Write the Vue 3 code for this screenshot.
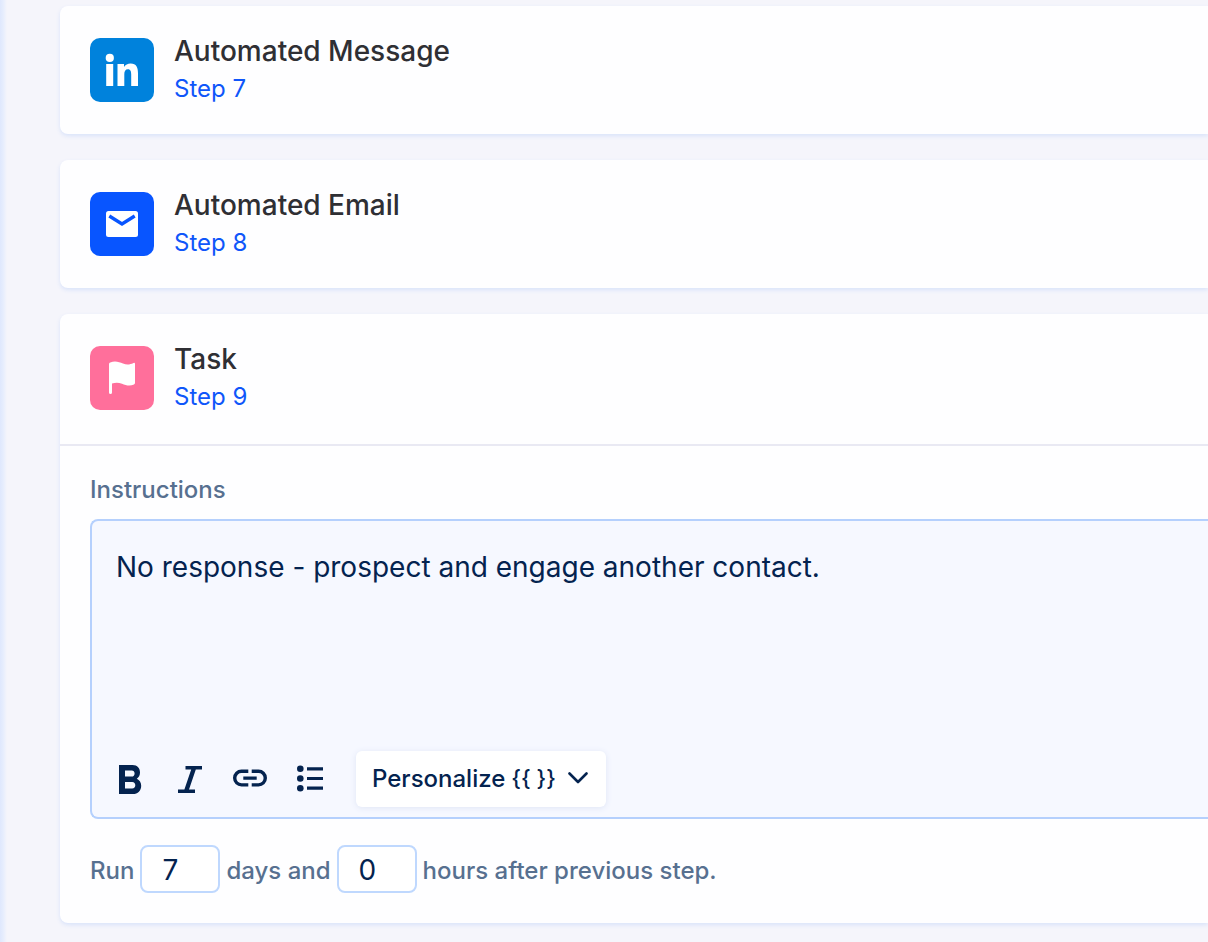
<script setup>
import { ref } from 'vue'

const steps = [
  { id: 7, title: 'Automated Message', kind: 'linkedin' },
  { id: 8, title: 'Automated Email', kind: 'email' },
  { id: 9, title: 'Task', kind: 'task' },
]
const instructions = ref('No response - prospect and engage another contact.')
const days = ref('7')
const hours = ref('0')
</script>

<template>
  <main class="sequence">
    <section v-for="step in steps" :key="step.id" class="card">
      <header class="card-head" :class="{ open: step.kind === 'task' }">
        <span class="badge" :class="step.kind">
          <svg v-if="step.kind === 'linkedin'" viewBox="0 0 64 64" aria-hidden="true">
            <circle cx="19.800" cy="19.900" r="4.100" />
            <rect x="16.200" y="26" width="7" height="22" />
            <path d="M27.500 26H34V29C35.300 26.800 37.700 25.500 40.600 25.500C46.500 25.500 48 29.500 48 35.300V48H41.200V36.500C41.200 33.600 40.600 31.300 38 31.300C35.300 31.300 34.300 33.300 34.300 36.300V48H27.500Z" />
          </svg>
          <svg v-else-if="step.kind === 'email'" viewBox="0 0 64 64" aria-hidden="true">
            <rect x="16" y="19" width="32" height="26" rx="2.500" />
            <path class="flap" d="M19.300 24L32 32L44.700 24" />
          </svg>
          <svg v-else viewBox="0 0 64 64" aria-hidden="true">
            <path d="M19 18.200Q19 17 20.200 16.600C25 14.500 29 16 33 17.600C37 19.100 40 18.600 43.500 17Q45 16.400 45 18V37Q45 38 44 38.400C40 40.300 36 39.400 32 37.700C28.500 36.300 25 36.400 22 37.600V46.500Q22 48 20.500 48Q19 48 19 46.500Z" />
          </svg>
        </span>
        <div class="heading">
          <h2>{{ step.title }}</h2>
          <a href="#">Step {{ step.id }}</a>
        </div>
      </header>

      <div v-if="step.kind === 'task'" class="card-body">
        <label class="caption" for="instructions">Instructions</label>
        <div class="editor">
          <textarea id="instructions" v-model="instructions" spellcheck="false"></textarea>
          <div class="toolbar">
            <div class="tools">
              <button type="button" aria-label="Bold">
                <svg viewBox="0 0 40 40" aria-hidden="true">
                  <path fill-rule="evenodd" d="M9 6H22.500C27.500 6 30 9.200 30 13.500C30 16.300 28.800 18.500 26.800 19.700C29.600 20.900 31.200 23.600 31.200 26.700C31.200 31.600 28 35 22.800 35H9ZM15 11.500V17.600H21.800C23.400 17.600 24.600 16.400 24.600 14.500C24.600 12.700 23.400 11.500 21.800 11.500ZM15 23V29.600H22.200C24.200 29.600 25.300 28.200 25.300 26.300C25.300 24.400 24.200 23 22.200 23Z" />
                </svg>
              </button>
              <button type="button" aria-label="Italic">
                <svg viewBox="0 0 40 40" aria-hidden="true">
                  <path d="M15.500 7H32V10.400H25.800L19 30.600H25V34H8V30.600H14.400L21.200 10.400H15.500Z" />
                </svg>
              </button>
              <button type="button" aria-label="Link">
                <svg viewBox="0 0 40 40" aria-hidden="true">
                  <path class="line" d="M18.300 12.300H11.500A6.800 6.800 0 0 0 11.500 25.900H18.300M21.700 12.300H28.500A6.800 6.800 0 0 1 28.500 25.900H21.700M13.300 19.100H26.700" />
                </svg>
              </button>
              <button type="button" aria-label="Bulleted list">
                <svg viewBox="0 0 40 40" aria-hidden="true">
                  <circle cx="10.300" cy="9.800" r="3.300" />
                  <circle cx="10.300" cy="19.500" r="3.300" />
                  <circle cx="10.300" cy="29.200" r="3.300" />
                  <path d="M17 8.200H33V11.400H17ZM17 17.900H33V21.100H17ZM17 27.600H33V30.800H17Z" />
                </svg>
              </button>
            </div>
            <button type="button" class="personalize">
              <span>Personalize</span>
              <span class="token" v-text="'{{ }}'"></span>
              <svg viewBox="0 0 20 20" aria-hidden="true"><path d="M1.500 5.500L10 14L18.500 5.500" /></svg>
            </button>
          </div>
        </div>
        <div class="schedule">
          <label for="days">Run</label>
          <input id="days" v-model="days" type="text" inputmode="numeric" />
          <label for="hours">days and</label>
          <input id="hours" v-model="hours" type="text" inputmode="numeric" />
          <span>hours after previous step.</span>
        </div>
      </div>
    </section>
  </main>
</template>

<style>
body {
  background: #f5f5fb;
}
</style>

<style scoped>
.sequence,
.sequence * {
  box-sizing: border-box;
}
.sequence {
  display: flex;
  flex-direction: column;
  gap: 26px;
  min-height: 100vh;
  padding: 6px 0 20px 60px;
  font-family: Inter, "Liberation Sans", sans-serif;
  background: linear-gradient(to right, #dfe8fd 0, #e6edfd 3px, #f5f5fb 7px);
}
.card {
  background: #fefeff;
  border-radius: 8px 0 0 8px;
  box-shadow: 0 2px 4px #d9e3fa;
}
.card-head {
  display: flex;
  gap: 20px;
  padding: 32px 30px;
}
.card-head.open {
  padding-bottom: 34px;
  border-bottom: 2px solid #e9e9f3;
}
.badge {
  flex: none;
  width: 64px;
  height: 64px;
  border-radius: 10px;
}
.badge svg {
  display: block;
  fill: #fff;
}
.badge.linkedin {
  background: #0082dc;
}
.badge.email {
  background: #0855ff;
}
.badge.task {
  background: #ff6f9b;
}
.flap {
  fill: none;
  stroke: #0855ff;
  stroke-width: 3.400;
}
.heading {
  display: flex;
  flex-direction: column;
  height: 64px;
}
h2 {
  margin: -6px 0 0;
  font-size: 28px;
  line-height: 38px;
  font-weight: 500;
  color: #2f2f34;
}
.heading a {
  font-size: 24px;
  line-height: 38px;
  color: #0f56fa;
  text-decoration: none;
}
.card-body {
  display: flex;
  flex-direction: column;
  padding: 28px 0 30px 30px;
}
.caption,
.schedule {
  font-size: 24px;
  line-height: 32px;
  font-weight: 500;
  color: #577090;
}
.editor {
  display: flex;
  flex-direction: column;
  margin: 13px 0 26px;
  border: 2px solid #b5d0fd;
  border-right: 0;
  border-radius: 8px 0 0 8px;
  background: #f6f8ff;
}
textarea {
  display: block;
  width: 100%;
  height: 230px;
  padding: 26px 24px;
  border: 0;
  outline: 0;
  resize: none;
  background: transparent;
  font-family: inherit;
  font-size: 28px;
  line-height: 40px;
  color: #04234f;
}
.toolbar {
  display: flex;
  align-items: center;
  gap: 26px;
  padding: 0 18px 10px;
}
.tools {
  display: flex;
  gap: 20px;
}
.tools button {
  width: 40px;
  height: 40px;
  padding: 0;
  border: 0;
  background: transparent;
}
.tools svg {
  display: block;
  fill: #04234f;
}
.tools .line {
  fill: none;
  stroke: #04234f;
  stroke-width: 3.400;
}
.personalize {
  display: flex;
  align-items: center;
  height: 56px;
  padding: 0 18px 2px 16px;
  border: 0;
  border-radius: 6px;
  background: #fff;
  box-shadow: 0 1px 6px #dfe5f5;
  font-family: inherit;
  font-size: 24px;
  font-weight: 500;
  color: #04234f;
}
.token {
  margin: 0 12px 0 6px;
  font-size: 22px;
}
.personalize svg {
  width: 20px;
  fill: none;
  stroke: #04234f;
  stroke-width: 2.600;
  stroke-linecap: round;
  stroke-linejoin: round;
}
.schedule {
  display: flex;
  align-items: center;
  gap: 6px;
}
.schedule label,
.schedule span {
  padding-top: 4px;
}
.schedule input {
  width: 80px;
  height: 48px;
  padding: 2px 20px 0;
  border: 2px solid #bfd8fe;
  border-radius: 8px;
  outline: 0;
  background: #fff;
  font-family: inherit;
  font-size: 28px;
  color: #04234f;
}
</style>
